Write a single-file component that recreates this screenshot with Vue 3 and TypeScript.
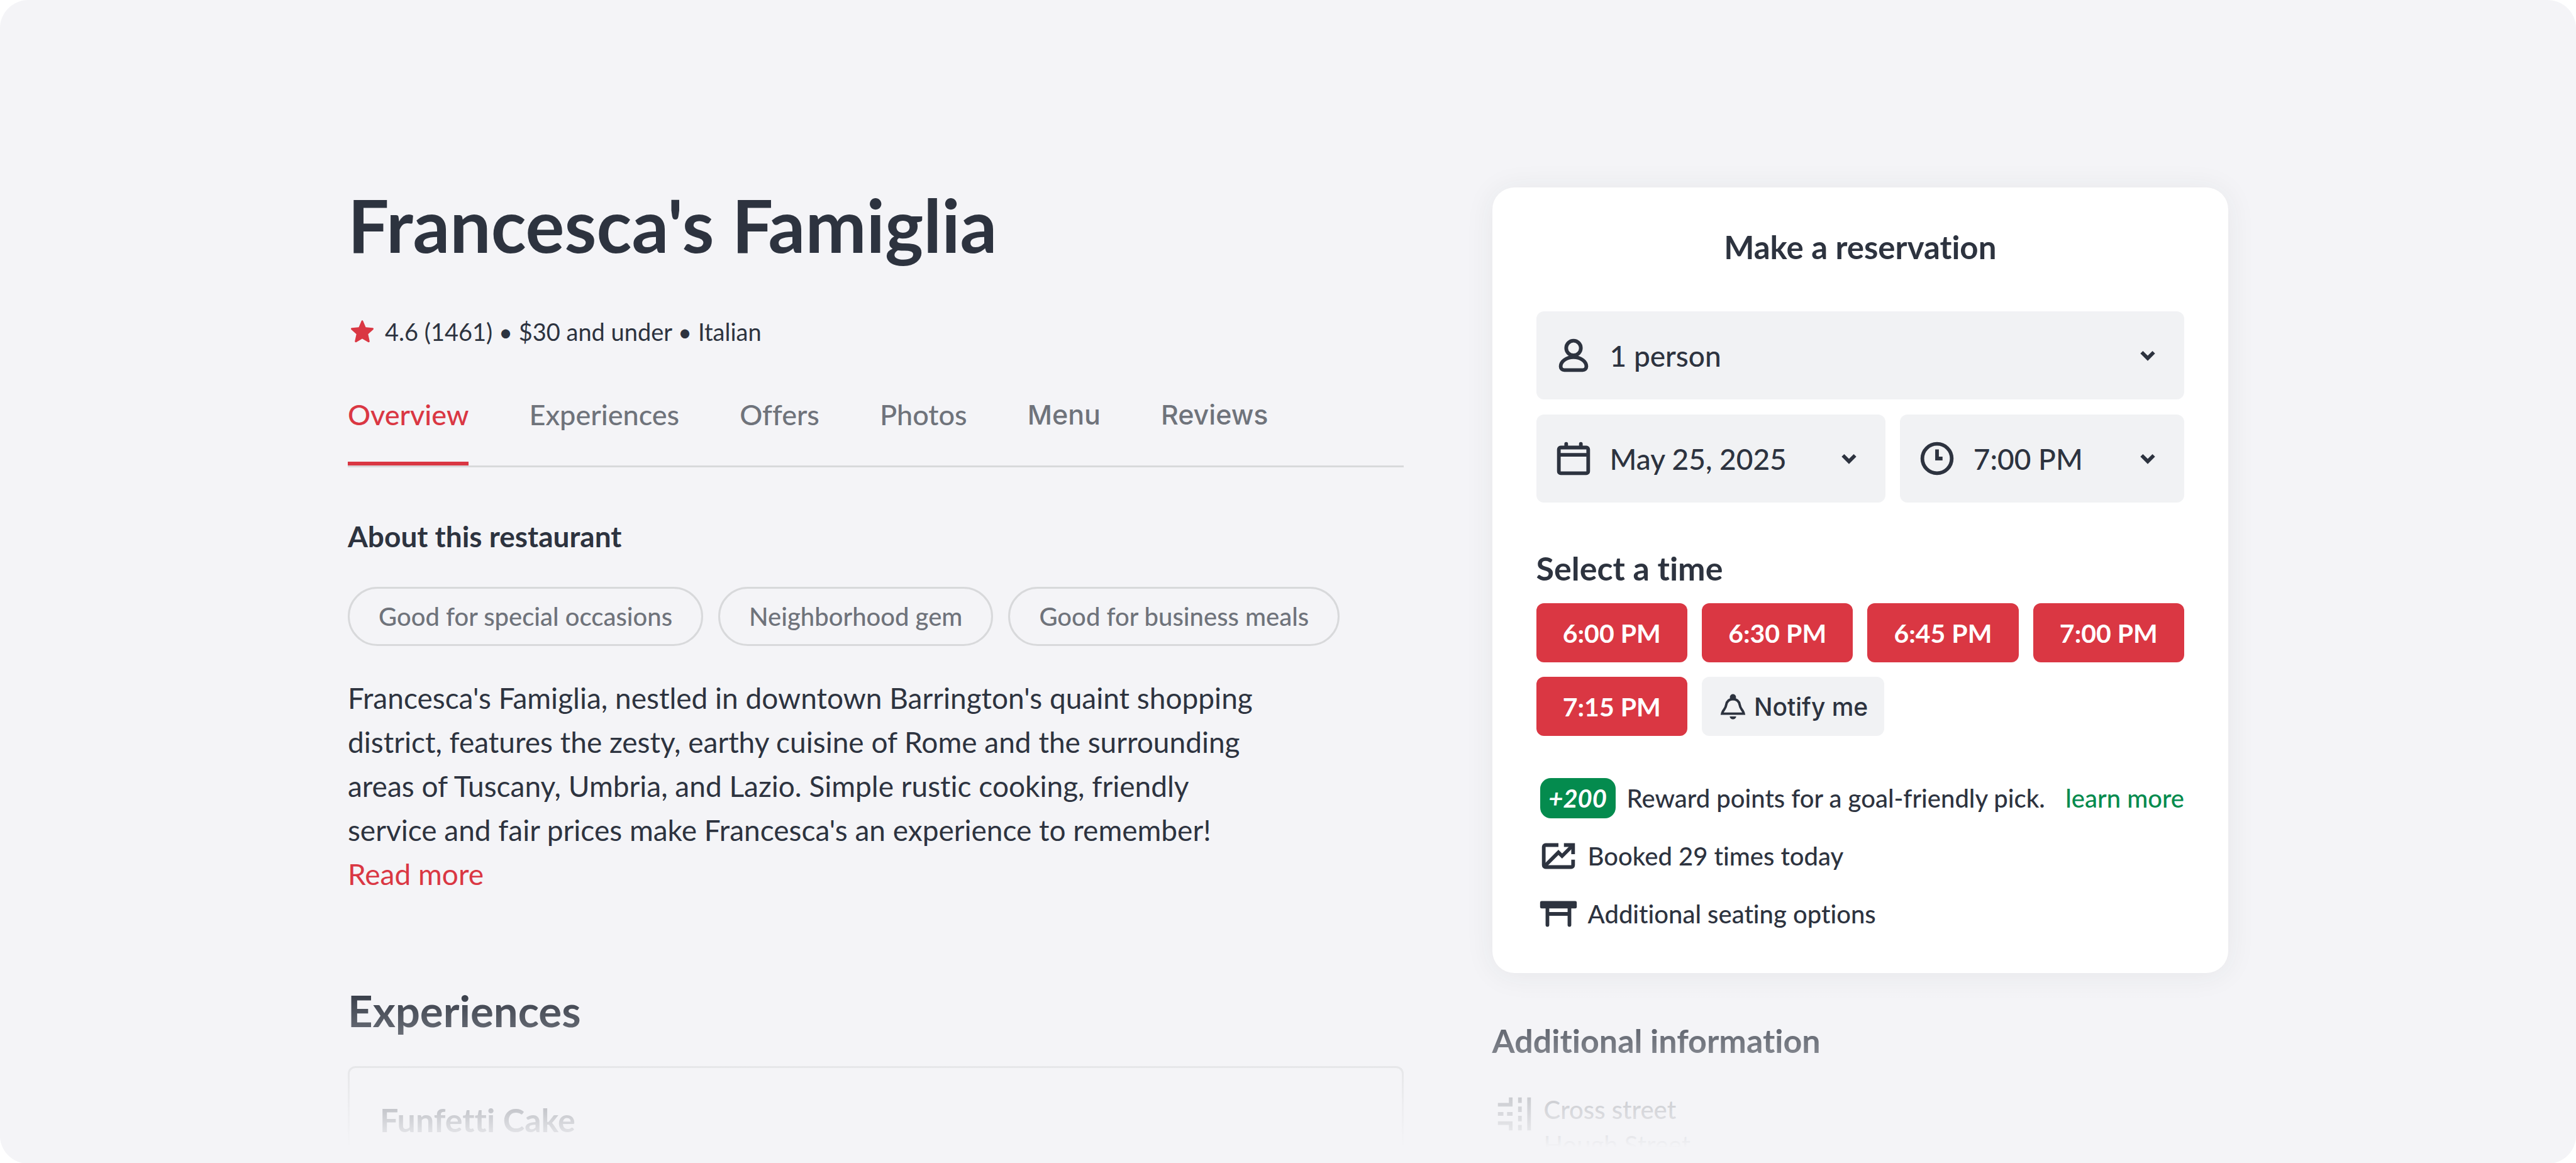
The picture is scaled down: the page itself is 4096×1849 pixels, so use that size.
<script setup lang="ts">
import { ref } from 'vue'

interface Tab {
  id: string
  label: string
  alternate?: boolean
}

const tabs: Tab[] = [
  { id: 'overview', label: 'Overview' },
  { id: 'experiences', label: 'Experiences' },
  { id: 'offers', label: 'Offers' },
  { id: 'photos', label: 'Photos' },
  { id: 'menu', label: 'Menu', alternate: true },
  { id: 'reviews', label: 'Reviews', alternate: true },
]
const activeTab = ref('overview')

const tags: string[] = ['Good for special occasions', 'Neighborhood gem', 'Good for business meals']
const slots: string[] = ['6:00 PM', '6:30 PM', '6:45 PM', '7:00 PM', '7:15 PM']

const party = ref('1 person')
const date = ref('May 25, 2025')
const time = ref('7:00 PM')
</script>

<template>
  <div class="sheet">
    <main class="page">
      <section class="details">
        <h1 class="name">Francesca's Famiglia</h1>
        <p class="rating">
          <svg class="star" viewBox="0 0 24 24" aria-hidden="true">
            <path d="M12 .8c.4 0 .7.2.9.7l2.6 6.2 6.9.6c1 .1 1.3 1.1.6 1.8l-5.1 4.6 1.5 6.9c.2 1-.7 1.6-1.5 1.1L12 19.2l-5.9 3.5c-.8.5-1.7-.1-1.5-1.1l1.5-6.9L1 10.1c-.7-.7-.4-1.7.6-1.8l6.9-.6 2.6-6.2c.2-.5.5-.7.9-.7z" />
          </svg>
          <span>4.6 (1461) • $30 and under • Italian</span>
        </p>

        <nav class="tabs" aria-label="Sections">
          <a
            v-for="tab in tabs"
            :key="tab.id"
            :href="'#' + tab.id"
            class="tab"
            :class="{ active: tab.id === activeTab, alternate: tab.alternate }"
            @click.prevent="activeTab = tab.id"
          >{{ tab.label }}</a>
        </nav>

        <h2 class="about">About this restaurant</h2>
        <ul class="tags">
          <li v-for="tag in tags" :key="tag" class="tag">{{ tag }}</li>
        </ul>
        <p class="description">
          Francesca's Famiglia, nestled in downtown Barrington's quaint shopping district, features the zesty,
          earthy cuisine of Rome and the surrounding areas of Tuscany, Umbria, and Lazio. Simple rustic cooking,
          friendly service and fair prices make Francesca's an experience to remember!
        </p>
        <a class="read-more" href="#more">Read more</a>

        <h2 class="section-title">Experiences</h2>
        <article class="experience">
          <h3 class="experience-name">Funfetti Cake</h3>
        </article>
      </section>

      <aside class="side">
        <form class="booking" @submit.prevent>
          <h2 class="booking-title">Make a reservation</h2>
          <div class="fields">
            <label class="field wide">
              <svg class="icon lead" viewBox="0 0 24 24" aria-hidden="true">
                <g class="line">
                  <circle cx="12" cy="8" r="4" />
                  <path d="M12 13c-4.2 0-7 2.5-7 5 0 1.2.8 2 2 2h10c1.2 0 2-.8 2-2 0-2.5-2.8-5-7-5z" />
                </g>
              </svg>
              <select v-model="party" aria-label="Party size">
                <option>1 person</option>
                <option>2 people</option>
              </select>
              <svg class="icon chevron" viewBox="0 0 24 24" aria-hidden="true">
                <path class="line" d="M8.7 10.3 12 13.6l3.3-3.3" />
              </svg>
            </label>
            <label class="field">
              <svg class="icon lead" viewBox="0 0 24 24" aria-hidden="true">
                <path d="M8 3a1 1 0 0 1 1 1v1h6V4a1 1 0 0 1 2 0v1h2a2 2 0 0 1 2 2v12a2 2 0 0 1-2 2H5a2 2 0 0 1-2-2V7a2 2 0 0 1 2-2h2V4a1 1 0 0 1 1-1zM5 7v2h14V7zM5 11v8h14v-8z" fill-rule="evenodd" />
              </svg>
              <select v-model="date" aria-label="Date">
                <option>May 25, 2025</option>
              </select>
              <svg class="icon chevron" viewBox="0 0 24 24" aria-hidden="true">
                <path class="line" d="M8.7 10.3 12 13.6l3.3-3.3" />
              </svg>
            </label>
            <label class="field">
              <svg class="icon lead" viewBox="0 0 24 24" aria-hidden="true">
                <g class="line">
                  <circle cx="12" cy="12" r="8" />
                  <path d="M12 7v5h3" />
                </g>
              </svg>
              <select v-model="time" aria-label="Time">
                <option>7:00 PM</option>
                <option>7:15 PM</option>
              </select>
              <svg class="icon chevron" viewBox="0 0 24 24" aria-hidden="true">
                <path class="line" d="M8.7 10.3 12 13.6l3.3-3.3" />
              </svg>
            </label>
          </div>

          <h3 class="slots-title">Select a time</h3>
          <div class="slots">
            <button v-for="slot in slots" :key="slot" type="button" class="slot">{{ slot }}</button>
            <button type="button" class="notify">
              <svg class="bell" viewBox="0 0 24 24" aria-hidden="true">
                <circle cx="12" cy="4.3" r="2.5" />
                <path class="line" d="M12 5.9c-3.3 0-5 2-5.5 4.7-.4 2.5-1.6 3.500-2.500 5-.5.8-.8 2.100-.8 2.100h17.600s-.3-1.300-.8-2.100c-.9-1.500-2.100-2.500-2.500-5C17 7.900 15.300 5.900 12 5.900z" />
                <path d="M9.4 19.9h5.2c0 1.3-1.2 2.3-2.6 2.3s-2.6-1-2.6-2.3z" />
              </svg>
              <span>Notify me</span>
            </button>
          </div>

          <ul class="perks">
            <li class="perk reward">
              <span class="points">+200</span>
              <span>Reward points for a goal-friendly pick.</span>
              <a class="learn" href="#rewards">learn more</a>
            </li>
            <li class="perk">
              <svg class="icon" viewBox="0 0 24 24" aria-hidden="true">
                <g class="line">
                  <path d="M12 6H5a1 1 0 0 0-1 1v10a1 1 0 0 0 1 1h14a1 1 0 0 0 1-1v-3" />
                  <path d="M15 6h5v5" />
                  <path d="M4.5 17.5 12 10l2 2 6-6" />
                </g>
              </svg>
              <span>Booked 29 times today</span>
            </li>
            <li class="perk">
              <svg class="icon" viewBox="0 0 24 24" aria-hidden="true">
                <rect x="2" y="5" width="20" height="4" rx=".8" />
                <path d="M5 8h2v3h10V8h2v10a1 1 0 0 1-2 0v-5H7v5a1 1 0 0 1-2 0z" />
              </svg>
              <span>Additional seating options</span>
            </li>
          </ul>
        </form>

        <section class="info">
          <h2 class="info-title">Additional information</h2>
          <div class="info-row">
            <svg class="icon" viewBox="0 0 24 24" aria-hidden="true">
              <path d="M9 3h2v5H3V6h6zM3 16h8v5H9v-3H3zM3 11h3v2H3zM8 11h3v2H8zM14 3h2v3h-2zM14 8h2v3h-2zM14 13h2v3h-2zM14 18h2v3h-2zM19 3h2v18h-2z" />
            </svg>
            <dl>
              <dt>Cross street</dt>
              <dd>Hough Street</dd>
            </dl>
          </div>
        </section>
      </aside>
    </main>
    <div class="fade"></div>
  </div>
</template>

<style>
body {
  margin: 0;
  background: #ffffff;
}
</style>

<style scoped>
.sheet {
  position: relative;
  min-height: 100vh;
  box-sizing: border-box;
  overflow: hidden;
  border-radius: 45px;
  background: #f4f4f7;
  color: #2d333f;
  font-family: Lato, "Open Sans", sans-serif;
  font-size: 40px;
  font-variant-ligatures: none;
}

h1, h2, h3, p, ul, dl, dd {
  margin: 0;
  padding: 0;
}

ul {
  list-style: none;
}

a {
  text-decoration: none;
}

.page {
  display: grid;
  grid-template-columns: 1678fr 1170fr;
  column-gap: 141px;
  padding: 287px 13.5% 0;
}

.icon {
  flex: none;
  width: 70px;
  height: 70px;
  fill: #2d333f;
}

.line {
  fill: none;
  stroke: #2d333f;
  stroke-width: 2;
}

.name {
  font-size: 116px;
  line-height: 142px;
  font-weight: 700;
}

.rating {
  display: flex;
  align-items: center;
  gap: 17px;
  margin-top: 74px;
  padding-left: 4px;
  font-size: 38px;
  line-height: 48px;
}

.star {
  width: 38px;
  height: 38px;
  fill: #da3743;
}

.tabs {
  display: flex;
  gap: 96px;
  margin-top: 80px;
  border-bottom: 3px solid #d8d9db;
}

.tab {
  padding-bottom: 47px;
  border-bottom: 6px solid transparent;
  color: #6f737b;
  font-size: 45px;
  line-height: 56px;
  font-weight: 500;
}

.tab.alternate {
  font-family: Inter, sans-serif;
  font-size: 43px;
}

.tab.active {
  border-bottom-color: #da3743;
  color: #da3743;
}

.about {
  margin-top: 82px;
  font-size: 46px;
  line-height: 56px;
  font-weight: 700;
}

.tags {
  display: flex;
  gap: 24px;
  margin-top: 52px;
}

.tag {
  padding: 0 46px;
  border: 3px solid #d8d9db;
  border-radius: 47px;
  color: #6f737b;
  font-weight: 500;
  line-height: 88px;
}

.description {
  max-width: 1460px;
  margin-top: 48px;
  font-size: 46px;
  line-height: 70px;
}

.read-more {
  display: block;
  color: #da3743;
  font-size: 46px;
  line-height: 70px;
}

.section-title {
  margin-top: 140px;
  font-size: 69px;
  line-height: 84px;
  font-weight: 700;
}

.experience {
  margin-top: 46px;
  padding: 50px 48px 38px;
  border: 3px solid #d8d9db;
  border-bottom: 0;
  border-radius: 12px 12px 0 0;
}

.experience-name {
  font-size: 52px;
  line-height: 64px;
  font-weight: 700;
}

.side {
  margin-top: 11px;
}

.booking {
  padding: 63px 70px 62px;
  border-radius: 35px;
  background: #ffffff;
  box-shadow: 0 3px 48px rgba(45, 51, 63, 0.07);
}

.booking-title,
.slots-title {
  font-size: 51px;
  line-height: 64px;
  font-weight: 700;
}

.booking-title {
  text-align: center;
}

.fields {
  display: grid;
  grid-template-columns: 555fr 452fr;
  gap: 24px 23px;
  margin-top: 70px;
}

.field {
  position: relative;
}

.wide {
  grid-column: 1 / -1;
}

.lead,
.chevron {
  position: absolute;
  top: 35px;
  pointer-events: none;
}

.lead {
  left: 24px;
}

.chevron {
  right: 23px;
}

select {
  display: block;
  width: 100%;
  height: 140px;
  padding: 0 96px 0 117px;
  border: 0;
  border-radius: 12px;
  background: #f1f2f4;
  appearance: none;
  color: inherit;
  font: 500 46px Lato, "Open Sans", sans-serif;
}

.slots-title {
  margin-top: 72px;
  font-size: 52px;
}

.slots {
  display: grid;
  grid-template-columns: repeat(4, 1fr);
  gap: 23px;
  margin-top: 24px;
}

.slot,
.notify {
  height: 94px;
  padding: 0;
  border: 0;
  border-radius: 12px;
}

.slot {
  background: #da3743;
  color: #ffffff;
  font: 700 41px Lato, "Open Sans", sans-serif;
}

.notify {
  display: flex;
  align-items: center;
  justify-content: center;
  grid-column: span 2;
  justify-self: start;
  gap: 10px;
  padding: 0 26px;
  background: #f1f2f4;
  color: #2d333f;
  font: 500 39px Inter, sans-serif;
}

.bell {
  width: 47px;
  height: 47px;
  fill: #2d333f;
}

.perks {
  display: flex;
  flex-direction: column;
  gap: 28px;
  margin-top: 67px;
  font-weight: 500;
}

.perk {
  display: flex;
  align-items: center;
  gap: 12px;
  height: 64px;
  white-space: nowrap;
}

.reward {
  gap: 18px;
  padding-left: 6px;
}

.points {
  width: 120px;
  border-radius: 17px;
  background: #048b4e;
  color: #ffffff;
  font-style: italic;
  font-weight: 700;
  line-height: 64px;
  text-align: center;
}

.learn {
  margin-left: auto;
  color: #048b4e;
}

.info-title {
  margin-top: 75px;
  font-size: 52px;
  line-height: 64px;
  font-weight: 700;
}

.info-row {
  display: flex;
  gap: 12px;
  margin-top: 50px;
  line-height: 56px;
}

.info-row .icon {
  fill: #6f737b;
}

.info-row dt {
  color: #6f737b;
  font-weight: 500;
}

.fade {
  position: absolute;
  right: 0;
  bottom: 0;
  left: 0;
  height: 284px;
  background: linear-gradient(rgba(244, 244, 247, 0), #f4f4f7 91%);
  pointer-events: none;
}
</style>
